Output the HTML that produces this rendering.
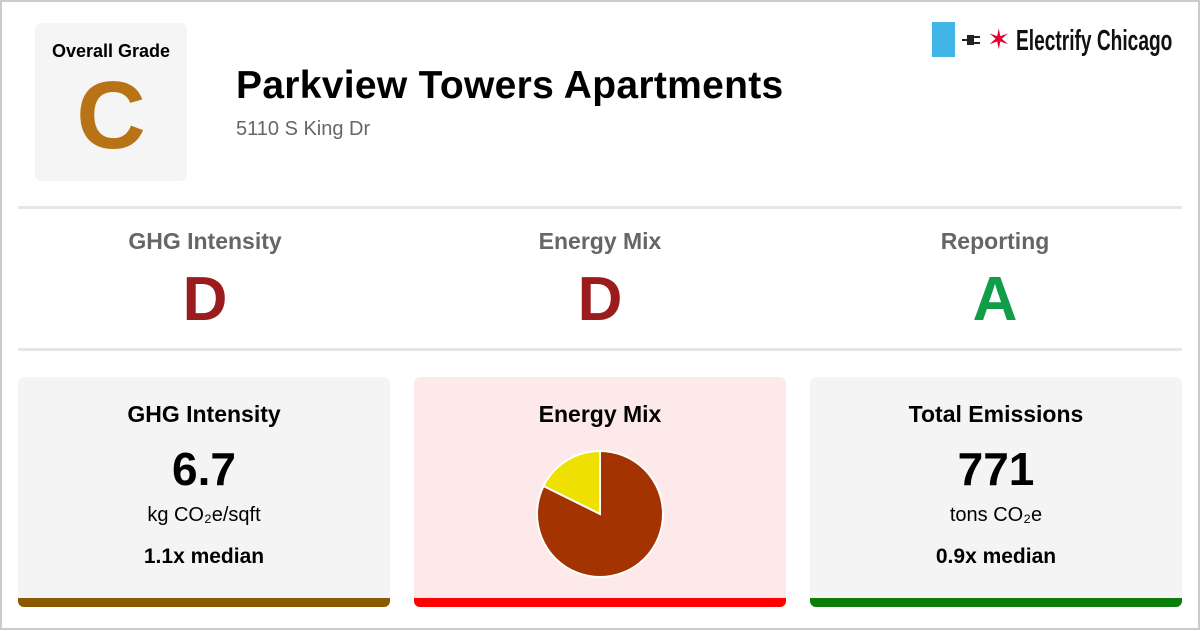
<!DOCTYPE html><html><head><style>
body{margin:0;width:1200px;height:630px;overflow:hidden;font-family:"Liberation Sans",sans-serif;background:#fff}
.frame{position:absolute;left:0;top:0;width:1196px;height:626px;border:2px solid #ccc}
.grade{position:absolute;left:35px;top:23px;width:152px;height:158px;background:#f5f5f5;border-radius:6px;text-align:center}
.grade .l{font-weight:bold;font-size:18px;margin-top:18px}
.grade .g{font-weight:bold;font-size:96px;color:#b87316;line-height:100px;margin-top:4px}
h1{position:absolute;left:236px;top:64px;margin:0;font-size:39px;font-weight:bold;letter-spacing:.3px;white-space:nowrap}
.addr{position:absolute;left:236px;top:118px;font-size:20px;color:#666}
.hr{position:absolute;left:18px;width:1164px;height:3px;background:#e6e6e6}
.sub{position:absolute;top:228px;width:394px;text-align:center}
.sub .t{font-size:23px;font-weight:bold;color:#666}
.sub .v{font-size:62px;font-weight:bold;line-height:70px;margin-top:10px}
.card{position:absolute;top:377px;width:372px;height:230px;background:#f4f4f4;border-radius:6px;text-align:center;overflow:hidden}
.card .t{font-size:23px;font-weight:bold;margin-top:24px}
.card .n{font-size:46px;font-weight:bold;margin-top:16px;line-height:50px}
.card .u{font-size:20px;margin-top:10px}
.card .m{font-size:21px;font-weight:bold;margin-top:18px}
.card .b{position:absolute;left:0;bottom:0;width:100%;height:9px}
</style></head><body><div class="frame"></div>
<div class="grade"><div class="l">Overall Grade</div><div class="g">C</div></div>
<h1>Parkview Towers Apartments</h1>
<div class="addr">5110 S King Dr</div>
<div style="position:absolute;left:932px;top:22px;width:23px;height:35px;background:#41b6e6"></div>
<svg style="position:absolute;left:962px;top:31px" width="20" height="18"><rect x="0" y="8" width="5" height="2" fill="#222"/><path d="M5 4h7v10H5z" fill="#222"/><rect x="12" y="5" width="6" height="2" fill="#222"/><rect x="12" y="11" width="6" height="2" fill="#222"/></svg>
<div style="position:absolute;left:987px;top:24px;color:#e4002b;font-size:28px;line-height:32px">✶</div>
<div style="position:absolute;left:1016px;top:25px;font-size:29px;font-weight:bold;transform:scaleX(.66);transform-origin:left;color:#111;white-space:nowrap">Electrify Chicago</div>
<div class="hr" style="top:206px"></div>
<div class="hr" style="top:348px"></div>
<div class="sub" style="left:8px"><div class="t">GHG Intensity</div><div class="v" style="color:#9b1c1c">D</div></div>
<div class="sub" style="left:403px"><div class="t">Energy Mix</div><div class="v" style="color:#9b1c1c">D</div></div>
<div class="sub" style="left:798px"><div class="t">Reporting</div><div class="v" style="color:#0f9d48">A</div></div>
<div class="card" style="left:18px"><div class="t">GHG Intensity</div><div class="n">6.7</div><div class="u">kg CO₂e/sqft</div><div class="m">1.1x median</div><div class="b" style="background:#8b5a00"></div></div>
<div class="card" style="left:414px;background:#fde8ea"><div class="t">Energy Mix</div>
<svg style="position:absolute;left:121px;top:72px" width="130" height="130"><circle cx="65" cy="65" r="63" fill="#a33300" stroke="#fff" stroke-width="2"/><path d="M65 65L65 2A63 63 0 0 0 8.5 37Z" fill="#eee000" stroke="#fff" stroke-width="2"/></svg>
<div class="b" style="background:#ff0000"></div></div>
<div class="card" style="left:810px"><div class="t">Total Emissions</div><div class="n">771</div><div class="u">tons CO₂e</div><div class="m">0.9x median</div><div class="b" style="background:#0a7d0a"></div></div>
</body></html>
